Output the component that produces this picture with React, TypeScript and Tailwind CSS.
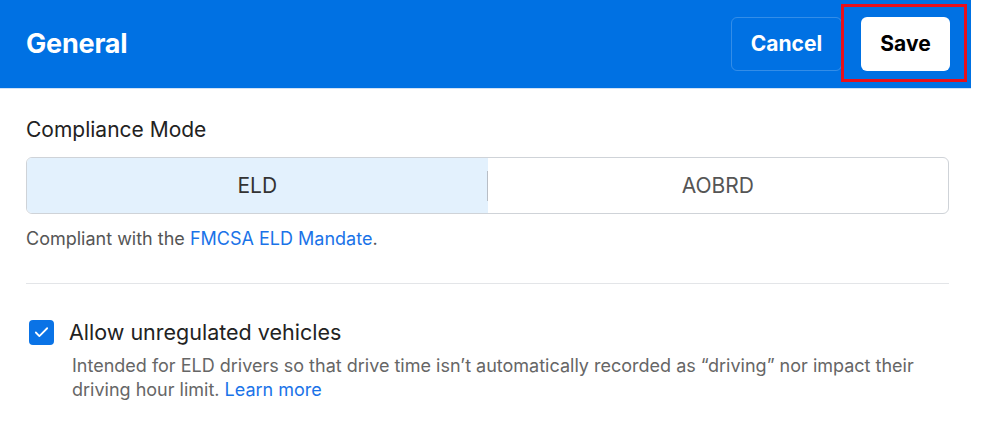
import { Check } from "lucide-react";

export default function App() {
  return (
    <div className="w-[981px] h-[425px] bg-white font-['Inter',sans-serif] overflow-hidden">
      <div className="w-[971px]">
        <header className="h-[89px] bg-[#0071e3] border-b border-[#cfe2f7] flex items-center justify-between pl-[26px] pr-[21px]">
          <h1 className="text-[27px] font-bold text-white tracking-[-0.2px]">General</h1>
          <div className="flex items-center gap-[19px] -mt-[1px]">
            <button className="w-[111px] h-[54px] rounded-md border border-white/20 text-white text-[21px] font-bold">
              Cancel
            </button>
            <div className="relative">
              <button className="w-[89px] h-[54px] rounded-md bg-white text-black text-[21px] font-bold">
                Save
              </button>
              <span className="absolute -left-[20px] -right-[17px] -top-[13px] -bottom-[11px] border-[3px] border-[#e8101a] pointer-events-none" />
            </div>
          </div>
        </header>

        <main className="pl-[26px] pr-[22px] pt-[27px]">
          <p className="text-[21px] leading-7 text-[#222]">Compliance Mode</p>
          <div className="mt-[13px] h-[57px] flex border border-[#cfd3d8] rounded-md overflow-hidden">
            <div className="flex-1 bg-[#e3f1fd] flex items-center justify-center text-[21px] text-[#333] relative">
              ELD
              <span className="absolute right-0 top-[13px] bottom-[12px] w-px bg-[#b8bec6]" />
            </div>
            <div className="flex-1 flex items-center justify-center text-[21px] text-[#555]">
              AOBRD
            </div>
          </div>
          <p className="mt-[13px] text-[18px] leading-6 text-[#555]">
            Compliant with the <a className="text-[#1a73e8]">FMCSA ELD Mandate</a>.
          </p>
          <div className="mt-[32px] h-px bg-[#e3e5e8]" />

          <div className="mt-[34px] flex items-center gap-[15px] pl-[3px]">
            <span className="w-[25px] h-[25px] rounded-[4px] bg-[#0a73e6] flex items-center justify-center">
              <Check className="w-[17px] h-[17px] text-white" strokeWidth={2.5} />
            </span>
            <span className="text-[21.5px] leading-7 text-[#222]">Allow unregulated vehicles</span>
          </div>
          <p className="mt-[8px] pl-[46px] text-[18px] leading-6 text-[#666]">
            Intended for ELD drivers so that drive time isn’t automatically recorded as “driving” nor impact their driving hour limit.{" "}
            <a className="text-[#1a73e8]">Learn more</a>
          </p>
        </main>
      </div>
    </div>
  );
}
